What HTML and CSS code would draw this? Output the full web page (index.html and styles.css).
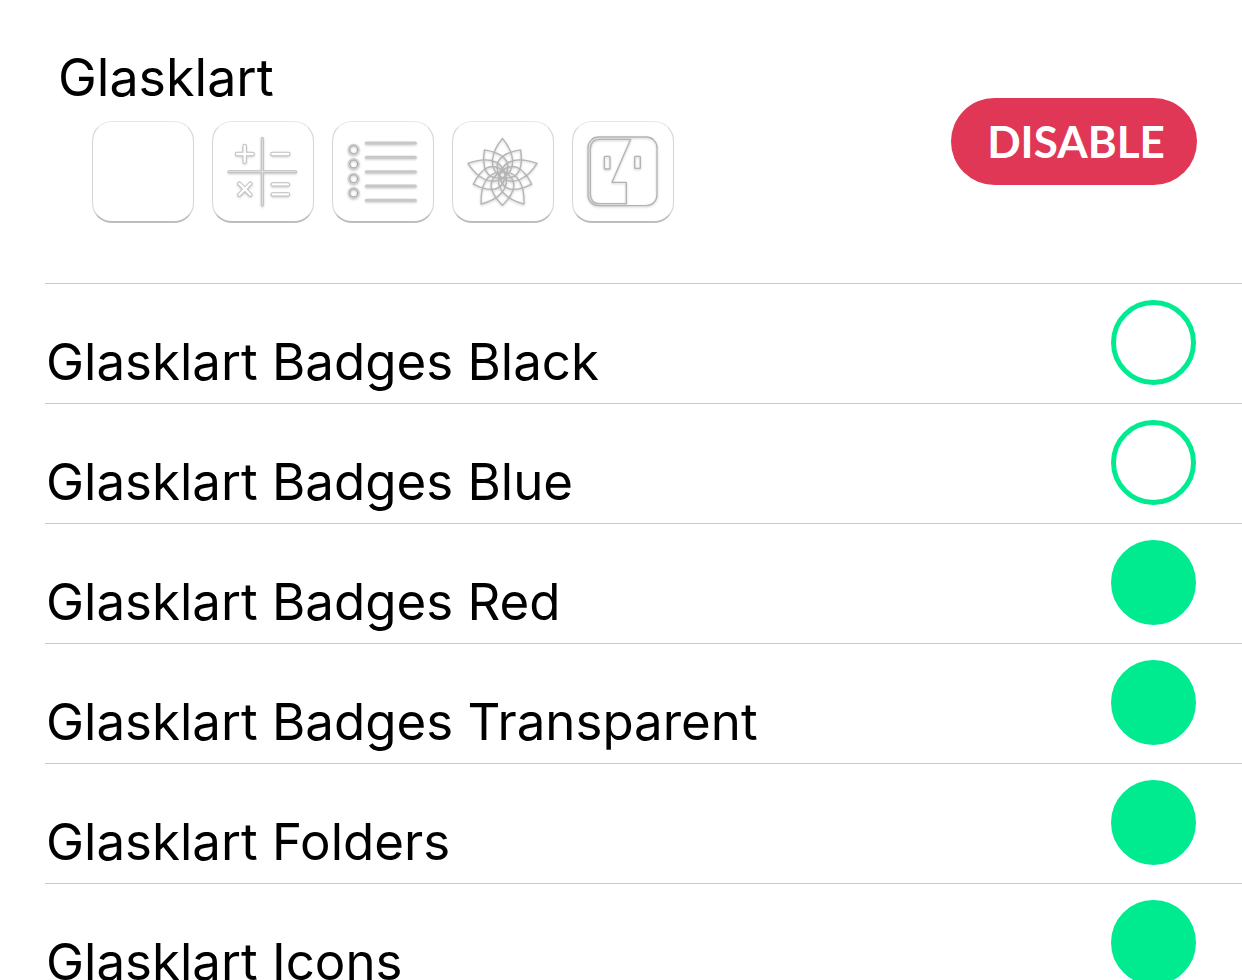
FILE: index.html
```html
<!DOCTYPE html>
<html lang="en">
<head>
<meta charset="utf-8">
<meta name="viewport" content="width=device-width, initial-scale=1">
<title>Glasklart</title>
<link rel="stylesheet" href="styles.css">
</head>
<body>
<main class="screen">
  <header class="theme">
    <div class="theme-info">
      <h1 class="theme-name">Glasklart</h1>
      <div class="previews">
        <div class="tile"></div>
        <div class="tile">
          <svg class="glyph" viewBox="21 18 306 306" aria-hidden="true">
            <g class="edge">
              <path d="M172 70V270M72 170H272"/>
              <path class="bold" d="M119 93V140M96 117H143M202 117H250M103 206L136 239M136 206L103 239M203 208H249M203 238H249"/>
            </g>
            <g class="core">
              <path d="M172 70V270M72 170H272"/>
              <path class="bold" d="M119 93V140M96 117H143M202 117H250M103 206L136 239M136 206L103 239M203 208H249M203 238H249"/>
            </g>
          </svg>
        </div>
        <div class="tile">
          <svg class="glyph" viewBox="21 18 306 306" aria-hidden="true">
            <path class="rules" d="M124 84H271M124 127H271M124 170H271M124 213H271M124 256H271"/>
            <g class="rings">
              <circle cx="86" cy="104" r="14"/><circle cx="86" cy="147" r="14"/><circle cx="86" cy="191" r="14"/><circle cx="86" cy="234" r="14"/>
            </g>
            <g class="ring-edges">
              <circle cx="86" cy="104" r="12"/><circle cx="86" cy="147" r="12"/><circle cx="86" cy="191" r="12"/><circle cx="86" cy="234" r="12"/>
            </g>
          </svg>
        </div>
        <div class="tile">
          <svg class="glyph" viewBox="21 18 306 306" aria-hidden="true">
            <defs>
              <path id="petal-long" d="M0 10C-48 -18 -32 -70 0 -109C32 -70 48 -18 0 10Z"/>
              <path id="petal-short" d="M0 10C-54 -14 -36 -56 0 -92C36 -56 54 -14 0 10Z"/>
            </defs>
            <g class="line" transform="translate(172.500 179)">
              <use href="#petal-short" transform="rotate(36)"/><use href="#petal-short" transform="rotate(108)"/><use href="#petal-short" transform="rotate(180)"/><use href="#petal-short" transform="rotate(252)"/><use href="#petal-short" transform="rotate(324)"/>
              <use href="#petal-long"/><use href="#petal-long" transform="rotate(72)"/><use href="#petal-long" transform="rotate(144)"/><use href="#petal-long" transform="rotate(216)"/><use href="#petal-long" transform="rotate(288)"/>
            </g>
          </svg>
        </div>
        <div class="tile">
          <svg class="glyph" viewBox="21 18 306 306" aria-hidden="true">
            <g class="line">
              <rect x="69" y="66" width="207" height="206" rx="32"/>
              <path d="M197 73H106Q76 73 76 103V236Q76 266 106 266H184V202H141Z"/>
              <rect x="118" y="124" width="17" height="38" rx="2"/>
              <rect x="209" y="124" width="17" height="36" rx="2"/>
            </g>
          </svg>
        </div>
      </div>
    </div>
    <button class="disable" type="button">DISABLE</button>
  </header>
  <ul class="options">
    <li class="option"><label class="option-name" for="black">Glasklart Badges Black</label><input class="dot" type="checkbox" id="black"></li>
    <li class="option"><label class="option-name" for="blue">Glasklart Badges Blue</label><input class="dot" type="checkbox" id="blue"></li>
    <li class="option"><label class="option-name" for="red">Glasklart Badges Red</label><input class="dot" type="checkbox" id="red" checked></li>
    <li class="option"><label class="option-name" for="transparent">Glasklart Badges Transparent</label><input class="dot" type="checkbox" id="transparent" checked></li>
    <li class="option"><label class="option-name" for="folders">Glasklart Folders</label><input class="dot" type="checkbox" id="folders" checked></li>
    <li class="option"><label class="option-name" for="icons">Glasklart Icons</label><input class="dot" type="checkbox" id="icons" checked></li>
  </ul>
</main>
</body>
</html>
```

FILE: styles.css
```css
* {
  box-sizing: border-box;
}

body {
  margin: 0;
  background: #fff;
  color: #000;
  font-family: Inter, "Liberation Sans", sans-serif;
}

.screen {
  height: 100vh;
  overflow: hidden;
}

.theme {
  display: flex;
  align-items: flex-start;
  justify-content: space-between;
  padding: 46px 45px 60px 58px;
}

.theme-name {
  margin: 0;
  font-size: 52px;
  font-weight: 400;
  line-height: 64px;
}

.previews {
  display: flex;
  gap: 18px;
  padding: 11px 0 0 34px;
}

.tile {
  width: 102px;
  height: 102px;
  border: 1px solid #d4d4d4;
  border-top-color: #e8e8e8;
  border-bottom: 2px solid #bdbdbd;
  border-radius: 20px;
}

.glyph {
  display: block;
  width: 102px;
  height: 102px;
  margin: -1px;
  fill: none;
  stroke-linecap: round;
  stroke-linejoin: round;
  filter: drop-shadow(0 1px 1px #0003);
}

.edge {
  stroke: #bfbfbf;
  stroke-width: 9px;
}

.edge .bold {
  stroke-width: 13px;
}

.core {
  stroke: #e2e2e2;
  stroke-width: 3px;
}

.core .bold {
  stroke: #fff;
  stroke-width: 7px;
}

.rules {
  stroke: #c8c8c8;
  stroke-width: 9px;
}

.rings {
  stroke: #cfcfcf;
  stroke-width: 8px;
}

.ring-edges {
  stroke: #999;
  stroke-width: 2px;
}

.line {
  stroke: #b4b4b4;
  stroke-width: 4px;
}

.disable {
  width: 246px;
  height: 87px;
  margin-top: 52px;
  padding: 0 0 1px 4px;
  border: 0;
  border-radius: 44px;
  background: #e13756;
  color: #fff;
  font-family: Lato, sans-serif;
  font-size: 44px;
  font-weight: 700;
}

.options {
  margin: 0;
  padding: 0 0 0 45px;
  list-style: none;
}

.option {
  display: flex;
  align-items: flex-start;
  justify-content: space-between;
  height: 120px;
  padding: 16px 46px 0 0;
  border-top: 1px solid #c8c8cc;
}

.option-name {
  padding: 30px 0 0 1px;
  font-size: 51px;
  line-height: 64px;
}

.dot {
  appearance: none;
  width: 85px;
  height: 85px;
  margin: 0;
  border: 5px solid #00eb8f;
  border-radius: 50%;
  background: #fff;
}

.dot:checked {
  background: #00eb8f;
}
```
